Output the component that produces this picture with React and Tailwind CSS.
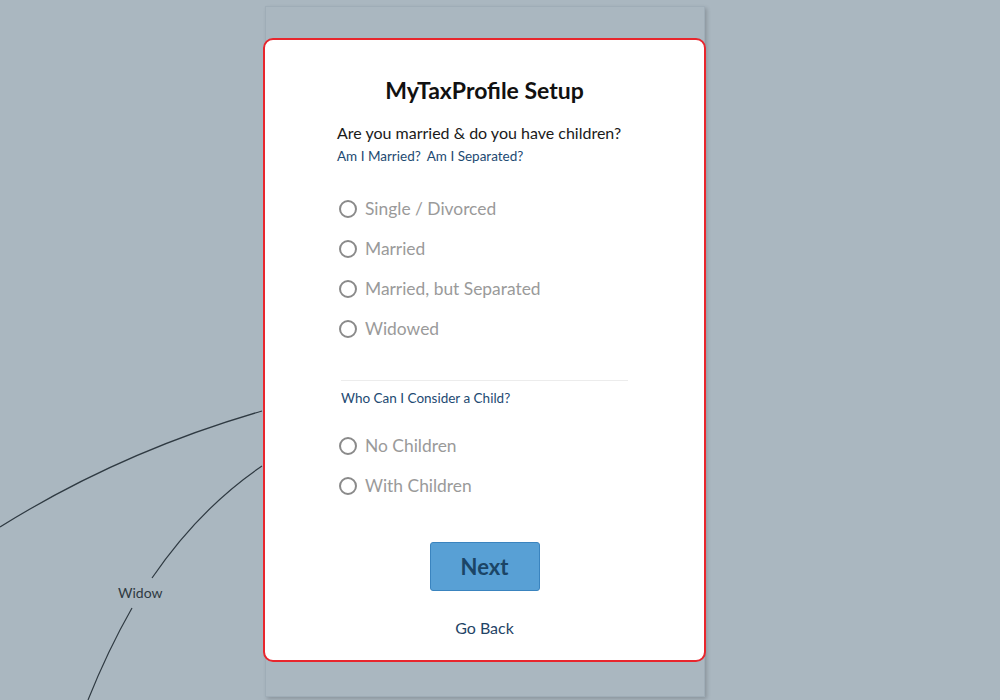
// MyTaxProfile setup step shown on a flow canvas

const MARITAL = ['Single / Divorced', 'Married', 'Married, but Separated', 'Widowed']
const CHILDREN = ['No Children', 'With Children']

function Radio({ label }) {
    return (
        <label className="flex items-center h-[40px] cursor-pointer">
            <span className="ml-[2px] w-[18px] h-[18px] rounded-full border-2 border-[#8a8a8a] bg-white shrink-0" />
            <span className="ml-[8px] text-[17.4px] text-[#9a9a9a] leading-none">{label}</span>
        </label>
    )
}

export default function App() {
    return (
        <div
            className="relative w-[1000px] h-[700px] overflow-hidden bg-[#aab7c0]"
            style={{ fontFamily: 'Lato, "Open Sans", sans-serif' }}
        >
            {/* Flow connectors behind the panel */}
            <svg className="absolute left-0 top-0" width="270" height="700" fill="none" stroke="#2f3a42" strokeWidth="1.2">
                <path d="M0 527 Q 120 452 262 411" />
                <path d="M262 466 Q 200 508 152 578" />
                <path d="M132 608 Q 108 650 88 700" />
            </svg>
            <div className="absolute left-[118px] top-[586px] text-[14px] text-[#2f3a42] leading-none">Widow</div>

            {/* Panel */}
            <div className="absolute left-[265px] top-[6px] w-[440px] h-[691px] bg-[#aab7c0] border border-[#9fadb7] shadow-[2px_2px_4px_rgba(0,0,0,0.18)]">
                <div className="mt-[31px] ml-[-3px] w-[443px] h-[624px] bg-white border-2 border-[#e8262d] rounded-[10px] flex flex-col">
                    <h1 className="mt-[36px] text-center text-[23px] font-bold text-[#111] leading-[28px]">
                        MyTaxProfile Setup
                    </h1>

                    <div className="pl-[72px] pr-[76px]">
                        <p className="mt-[18px] text-[16px] text-[#1a1a1a] leading-[22px]">
                            Are you married &amp; do you have children?
                        </p>
                        <p className="mt-[3px] text-[13.5px] text-[#1d4a72] leading-[18px]">
                            <a>Am I Married?</a>
                            <span className="ml-[6px]">Am I Separated?</span>
                        </p>

                        <div className="mt-[24px] flex flex-col">
                            {MARITAL.map((m) => (
                                <Radio key={m} label={m} />
                            ))}
                        </div>

                        <div className="mt-[31px] ml-[4px] h-px bg-[#ececec]" />

                        <p className="mt-[8px] ml-[4px] text-[13.5px] text-[#1d4a72] leading-[18px]">
                            Who Can I Consider a Child?
                        </p>

                        <div className="mt-[19px] flex flex-col">
                            {CHILDREN.map((c) => (
                                <Radio key={c} label={c} />
                            ))}
                        </div>
                    </div>

                    <div className="mt-[36px] flex flex-col items-center">
                        <button className="w-[110px] h-[49px] rounded-[3px] bg-[#58a0d5] border border-[#3a84bf] text-[22px] font-bold text-[#1b4566]">
                            Next
                        </button>
                        <a className="mt-[27px] text-[16px] text-[#1f4466] leading-[20px]">Go Back</a>
                    </div>
                </div>
            </div>
        </div>
    )
}
